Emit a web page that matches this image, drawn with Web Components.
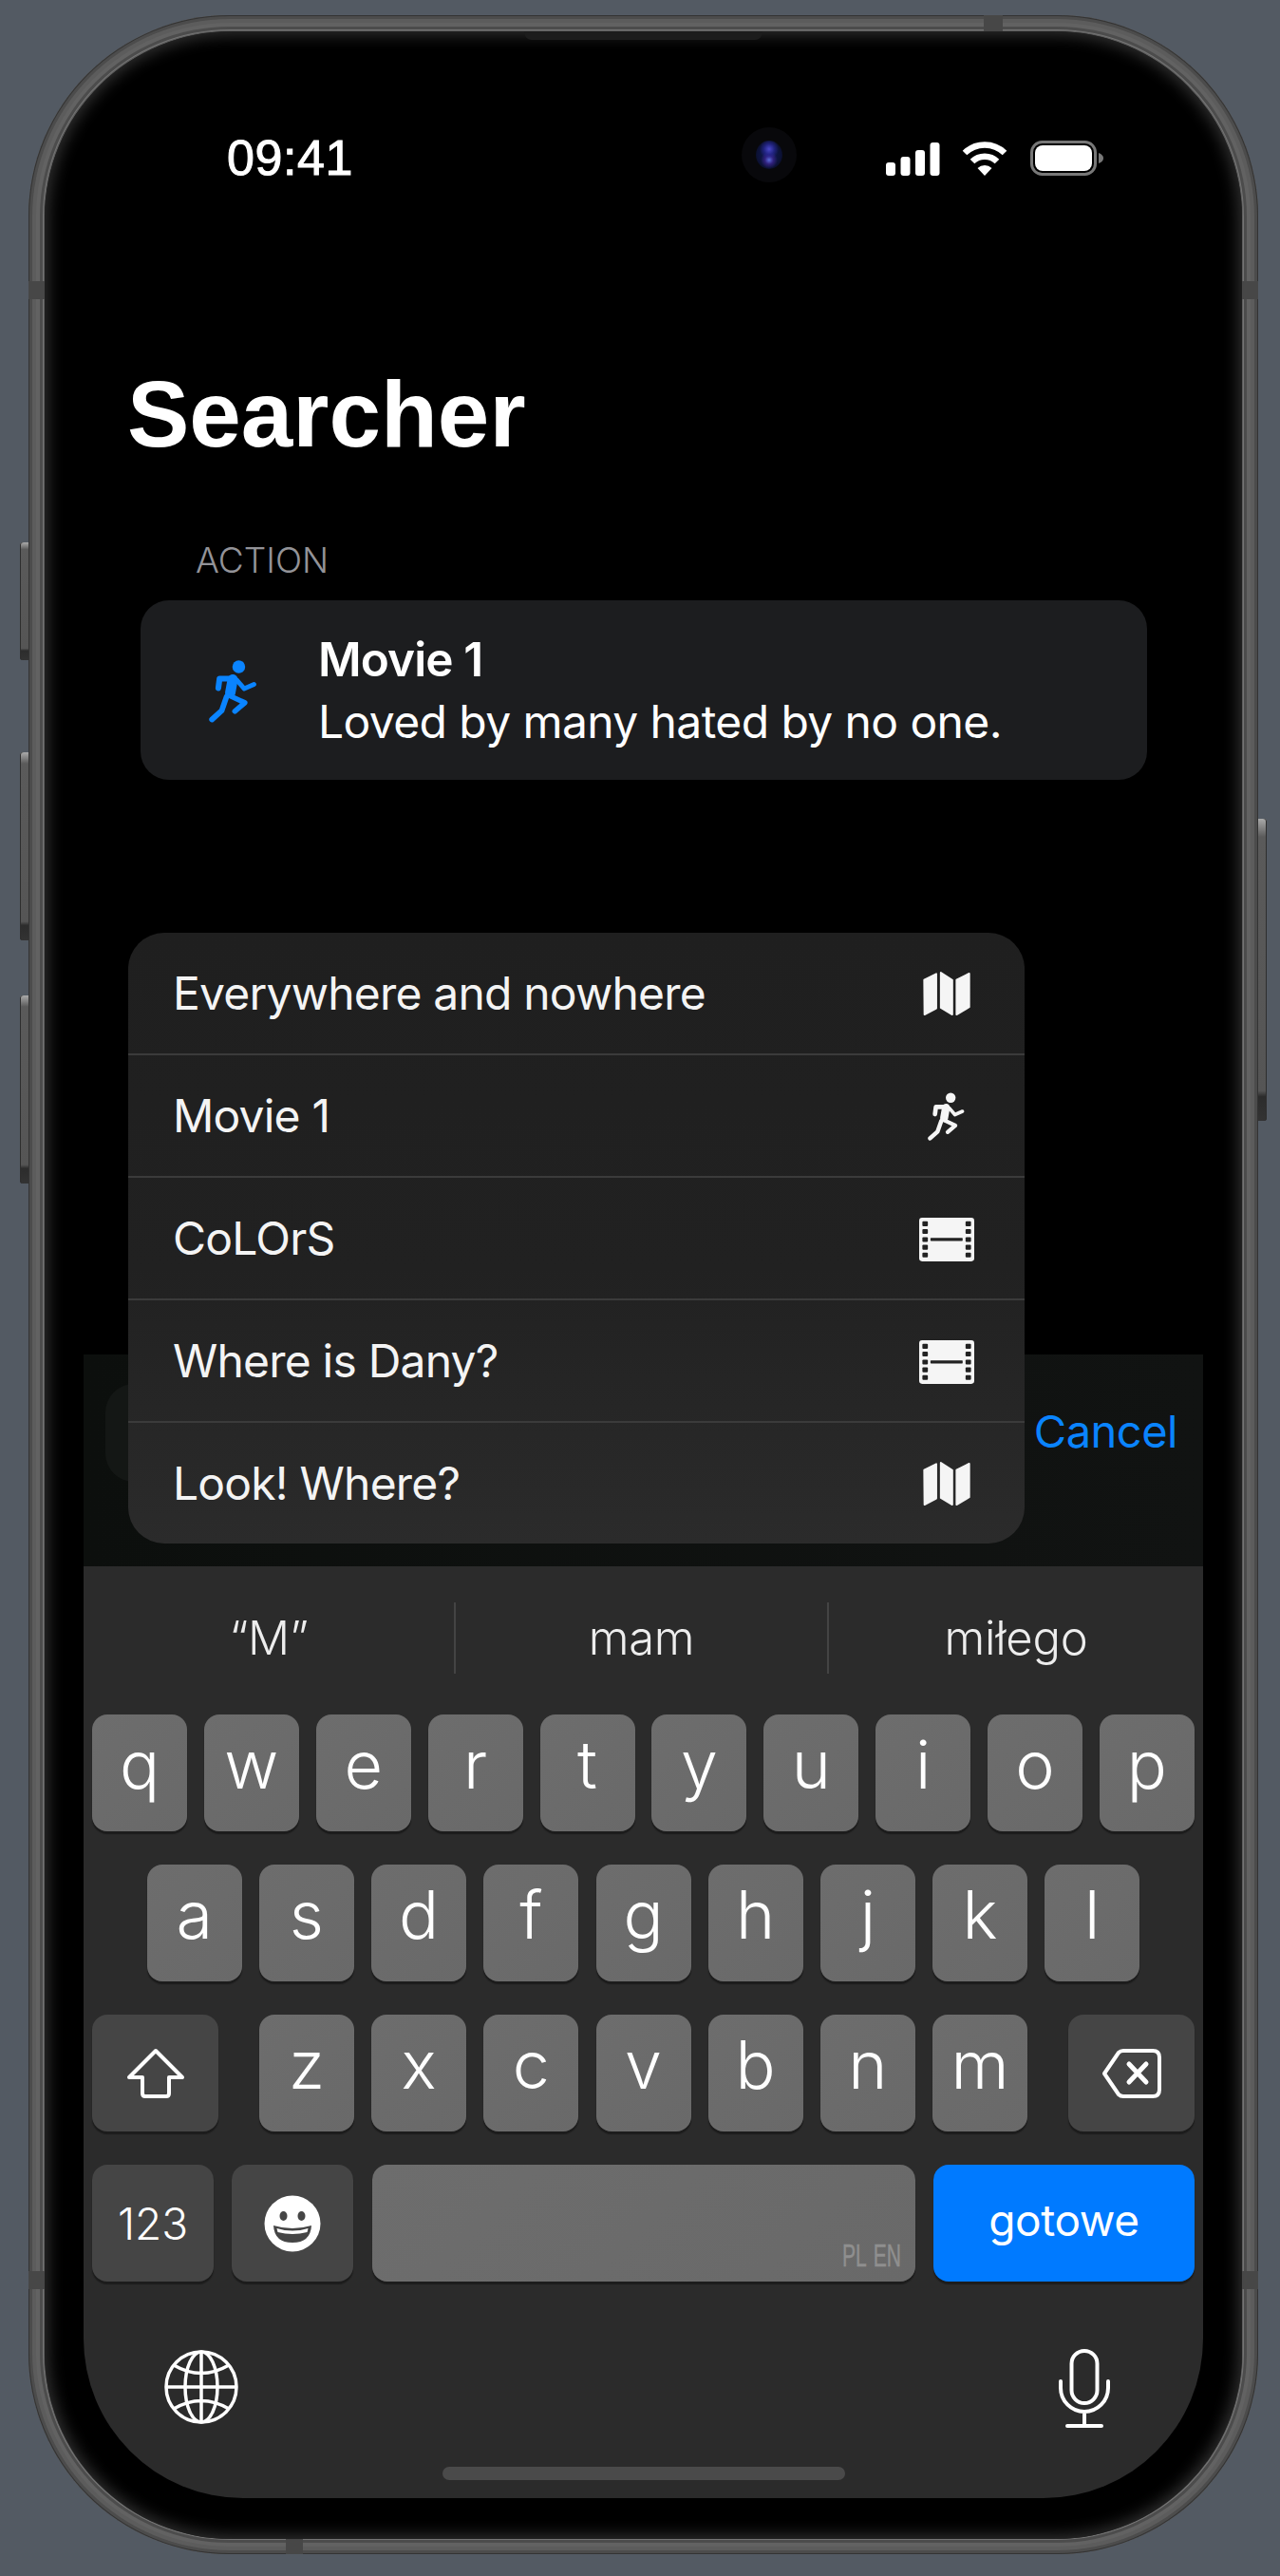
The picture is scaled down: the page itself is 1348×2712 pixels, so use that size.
<!DOCTYPE html>
<html lang="en">
<head>
<meta charset="utf-8">
<title>Searcher</title>
<style>
  html, body { margin: 0; background: #535a63; }
</style>
</head>
<body>
<phone-frame>
  <status-bar></status-bar>
  <large-title>Searcher</large-title>
  <result-section heading="ACTION">
    <result-card title="Movie 1" text="Loved by many hated by no one."></result-card>
  </result-section>
  <search-bar></search-bar>
  <suggest-menu>
    <menu-row icon="map">Everywhere and nowhere</menu-row>
    <menu-row icon="run">Movie 1</menu-row>
    <menu-row icon="film">CoLOrS</menu-row>
    <menu-row icon="film">Where is Dany?</menu-row>
    <menu-row icon="map">Look! Where?</menu-row>
  </suggest-menu>
  <ios-keyboard></ios-keyboard>
</phone-frame>

<script>
const SF = `Inter, "Liberation Sans", sans-serif`;

const ICONS = {
  run: `<svg xmlns="http://www.w3.org/2000/svg" viewBox="120 92 162 208" width="100%" height="100%" fill="none" stroke="currentColor" stroke-linecap="round" stroke-linejoin="round">
      <circle cx="218" cy="118" r="21" fill="currentColor" stroke="none"/>
      <path d="M151 188 L155 157 L200 157" stroke-width="19"/>
      <path d="M198 160 L190 204" stroke-width="34"/>
      <path d="M212 162 L236 190 L268 176" stroke-width="15"/>
      <path d="M186 212 L238 236 L205 264" stroke-width="17"/>
      <path d="M178 216 L162 262 L130 291" stroke-width="18"/>
    </svg>`,
  map: `<svg xmlns="http://www.w3.org/2000/svg" viewBox="92 62 158 148" width="100%" height="100%" fill="currentColor" stroke="currentColor" stroke-width="6" stroke-linejoin="round">
      <path d="M98 92 L137 72 V184 L99 204 Z"/>
      <path d="M152 68 L189 92 V204 L152 182 Z"/>
      <path d="M203 92 L244 71 V180 L203 204 Z"/>
    </svg>`,
  film: `<svg xmlns="http://www.w3.org/2000/svg" viewBox="87 845 171 135" width="100%" height="100%">
      <rect x="87" y="845" width="171" height="135" rx="9" fill="#f5f5f5"/>
      <g fill="#222">
        <rect x="97" y="856" width="17" height="15" rx="3"/><rect x="97" y="880" width="17" height="15" rx="3"/><rect x="97" y="905" width="17" height="15" rx="3"/><rect x="97" y="929" width="17" height="15" rx="3"/><rect x="97" y="953" width="17" height="15" rx="3"/>
        <rect x="231" y="856" width="17" height="15" rx="3"/><rect x="231" y="880" width="17" height="15" rx="3"/><rect x="231" y="905" width="17" height="15" rx="3"/><rect x="231" y="929" width="17" height="15" rx="3"/><rect x="231" y="953" width="17" height="15" rx="3"/>
        <rect x="122" y="907" width="100" height="10" rx="2"/>
      </g>
    </svg>`,
  shift: `<svg xmlns="http://www.w3.org/2000/svg" viewBox="0 0 62 54" width="62" height="54" fill="none" stroke="#fff" stroke-width="4" stroke-linejoin="round">
      <path d="M31 3 L59 31 H45 V48 Q45 51 42 51 H20 Q17 51 17 48 V31 H3 Z"/>
    </svg>`,
  del: `<svg xmlns="http://www.w3.org/2000/svg" viewBox="0 0 64 54" width="64" height="54" fill="none" stroke="#fff" stroke-width="4" stroke-linejoin="round" stroke-linecap="round">
      <path d="M23 3 H54 Q61 3 61 10 V44 Q61 51 54 51 H23 Q20 51 18 49 L3 27 L18 5 Q20 3 23 3 Z"/>
      <path d="M29 17 L47 36 M47 17 L29 36" stroke-width="5"/>
    </svg>`,
  emoji: `<svg xmlns="http://www.w3.org/2000/svg" viewBox="0 0 60 60" width="60" height="60">
      <circle cx="30" cy="30" r="29.5" fill="#fff"/>
      <ellipse cx="20.5" cy="22" rx="4" ry="5" fill="#454545"/>
      <ellipse cx="39.5" cy="22" rx="4" ry="5" fill="#454545"/>
      <path d="M10 32 Q30 38 50 32 Q49 50 30 50 Q11 50 10 32 Z" fill="#454545"/>
      <path d="M13.5 35 Q30 40 46.500 35 L45.500 39 Q30 43 14.500 39 Z" fill="#fff"/>
    </svg>`,
  globe: `<svg xmlns="http://www.w3.org/2000/svg" viewBox="0 0 80 80" width="80" height="80" fill="none" stroke="#fff" stroke-width="3.500">
      <circle cx="40" cy="40" r="37"/>
      <ellipse cx="40" cy="40" rx="17" ry="37"/>
      <path d="M40 3 V77 M3 40 H77 M11 17 Q40 34 69 17 M11 63 Q40 46 69 63"/>
    </svg>`,
  mic: `<svg xmlns="http://www.w3.org/2000/svg" viewBox="0 0 56 84" width="56" height="84" fill="none" stroke="#fff" stroke-width="4" stroke-linecap="round">
      <rect x="14.500" y="2" width="27" height="55" rx="13.500"/>
      <path d="M3 34 V41 A25 25 0 0 0 53 41 V34 M28 66 V80 M10 81 H46"/>
    </svg>`,
};

class PhoneFrame extends HTMLElement {
  constructor() {
    super();
    this.shadow = this.attachShadow({ mode: 'open' });
    this.shadow.innerHTML = `
      <style>
        :host {
          display: block;
          position: relative;
          box-sizing: border-box;
          width: 1295px;
          height: 2673px;
          margin: 16px 0 0 30px;
          padding: 17px 17px 16px 17px;
          border-radius: 212px;
          background: #5c5c5c;
          box-shadow: inset 0 0 0 1px #333, inset 0 0 0 4px #4c4c4c, inset 0 0 0 8px #5c5c5c, inset 0 0 0 12px #626262, inset 0 0 0 15px #4c4c4c, inset 0 0 0 16px #747474;
        }
        .screen {
          position: relative;
          box-sizing: border-box;
          height: 100%;
          padding: 0 41px 43px;
          border-radius: 196px;
          background: #000;
          box-shadow: inset 0 0 16px 4px #303030;
          display: flex;
          flex-direction: column;
        }
        .btn {
          position: absolute;
          width: 9px;
          background: linear-gradient(#aaa, #5a5a5a 6%, #555 90%, #2c2c2c 92%, #333);
          box-shadow: inset 1px 0 0 #2e2e2e;
        }
        .left { left: -9px; border-radius: 3px 0 0 3px; }
        .right { right: -9px; border-radius: 0 3px 3px 0; box-shadow: inset -1px 0 0 #2e2e2e; }
        .band { position: absolute; background: #474747; }
        .speaker {
          position: absolute;
          left: 522px;
          top: 17px;
          width: 251px;
          height: 9px;
          background: #1c1c1c;
          border-radius: 0 0 8px 8px;
        }
        .camera {
          position: absolute;
          left: 751px;
          top: 118px;
          width: 58px;
          height: 58px;
          border-radius: 50%;
          background: #08080b;
          display: flex;
          align-items: center;
          justify-content: center;
        }
        .lens {
          width: 28px;
          height: 30px;
          border-radius: 50%;
          background:
            radial-gradient(circle at 50% 30%, #4a48c8 0, rgba(40, 40, 150, 0.7) 22%, transparent 40%),
            radial-gradient(circle at 50% 68%, #5a6ad8 0, rgba(70, 40, 160, 0.6) 18%, transparent 36%),
            radial-gradient(ellipse at center, #101a58 0, #0c1238 60%, #08080b 100%);
        }
      </style>
      <div class="btn left" style="top:555px;height:124px"></div>
      <div class="btn left" style="top:776px;height:198px"></div>
      <div class="btn left" style="top:1032px;height:198px"></div>
      <div class="btn right" style="top:846px;height:318px"></div>
      <div class="band" style="left:0;top:280px;width:17px;height:19px"></div>
      <div class="band" style="right:0;top:280px;width:17px;height:19px"></div>
      <div class="band" style="left:0;top:2375px;width:17px;height:19px"></div>
      <div class="band" style="right:0;top:2375px;width:17px;height:19px"></div>
      <div class="band" style="left:1006px;top:0;width:20px;height:17px"></div>
      <div class="band" style="left:271px;bottom:0;width:18px;height:16px"></div>
      <div class="screen"><slot></slot></div>
      <div class="speaker"></div>
      <div class="camera"><div class="lens"></div></div>
    `;
  }
}

class StatusBar extends HTMLElement {
  constructor() {
    super();
    this.shadow = this.attachShadow({ mode: 'open' });
    this.shadow.innerHTML = `
      <style>
        :host {
          display: flex;
          justify-content: space-between;
          align-items: center;
          box-sizing: border-box;
          height: 152px;
          padding: 115px 104px 0 151px;
          color: #fff;
        }
        .time { font: 400 52px/51px "Liberation Sans", sans-serif; letter-spacing: 0.6px; -webkit-text-stroke: 1px #fff; }
        .icons { display: flex; align-items: center; gap: 23px; }
      </style>
      <span class="time">09:41</span>
      <div class="icons">
        <svg xmlns="http://www.w3.org/2000/svg" width="57" height="36" viewBox="0 0 57 36" fill="#fff">
          <rect x="0" y="22" width="10" height="14" rx="3"/>
          <rect x="15.500" y="16" width="10" height="20" rx="3"/>
          <rect x="31" y="9" width="10" height="27" rx="3"/>
          <rect x="46.500" y="1" width="10" height="35" rx="3"/>
        </svg>
        <svg xmlns="http://www.w3.org/2000/svg" width="48" height="36" viewBox="0 0 48 36" style="margin-right:1px">
          <g fill="none" stroke="#fff" stroke-width="6.500">
            <path d="M3 12 A30 30 0 0 1 45 12"/>
            <path d="M11 21 A18.500 18.500 0 0 1 37 21"/>
          </g>
          <path d="M24 36 L16.500 28 A11 11 0 0 1 31.500 28 Z" fill="#fff"/>
        </svg>
        <svg xmlns="http://www.w3.org/2000/svg" width="78" height="37" viewBox="0 0 78 37">
          <rect x="1.500" y="1.500" width="67" height="34" rx="11" fill="none" stroke="#787878" stroke-width="3"/>
          <rect x="5" y="5" width="60" height="27" rx="8" fill="#fff"/>
          <path d="M72 13 Q77 15 77 18.500 Q77 22 72 24 Z" fill="#787878"/>
        </svg>
      </div>
    `;
  }
}

class LargeTitle extends HTMLElement {
  constructor() {
    super();
    this.shadow = this.attachShadow({ mode: 'open' });
    this.shadow.innerHTML = `
      <style>
        :host {
          display: block;
          margin: 203px 0 2px 46px;
          font: 700 98px/97px "Liberation Sans", sans-serif;
          color: #fff;
        }
      </style>
      <slot></slot>
    `;
  }
}

class ResultSection extends HTMLElement {
  constructor() {
    super();
    this.shadow = this.attachShadow({ mode: 'open' });
    this.shadow.innerHTML = `
      <style>
        :host { display: block; margin: 83px 0 0 60px; width: 1060px; }
        .head {
          height: 40px;
          margin: 0 0 22px 58px;
          font: 300 37px/40px ${SF};
          color: #939398;
        }
      </style>
      <div class="head">${this.getAttribute('heading')}</div>
      <slot></slot>
    `;
  }
}

class ResultCard extends HTMLElement {
  constructor() {
    super();
    this.shadow = this.attachShadow({ mode: 'open' });
    this.shadow.innerHTML = `
      <style>
        :host {
          display: flex;
          align-items: center;
          box-sizing: border-box;
          height: 189px;
          padding-left: 72px;
          border-radius: 30px;
          background: #1c1d1f;
          color: #fff;
        }
        .ico { width: 52px; height: 68px; color: #0a84ff; margin-right: 63px; }
        .t { font: 600 49.500px/65px ${SF}; letter-spacing: -0.9px; }
        .d { font: 400 48px/65px ${SF}; letter-spacing: -0.6px; }
      </style>
      <div class="ico">${ICONS.run}</div>
      <div>
        <div class="t">${this.getAttribute('title')}</div>
        <div class="d">${this.getAttribute('text')}</div>
      </div>
    `;
  }
}

class SearchBar extends HTMLElement {
  constructor() {
    super();
    this.shadow = this.attachShadow({ mode: 'open' });
    this.shadow.innerHTML = `
      <style>
        :host {
          display: flex;
          align-items: flex-start;
          box-sizing: border-box;
          height: 223px;
          margin-top: auto;
          padding: 31px 27px 0 23px;
          gap: 15px;
          background: linear-gradient(90deg, #0c0f0d, #111312);
        }
        .field { flex: 1; height: 103px; border-radius: 30px; background: #141715; }
        .cancel { font: 400 47px/99px ${SF}; letter-spacing: -0.5px; color: #0a84ff; }
      </style>
      <div class="field"></div>
      <span class="cancel">Cancel</span>
    `;
  }
}

class SuggestMenu extends HTMLElement {
  constructor() {
    super();
    this.shadow = this.attachShadow({ mode: 'open' });
    this.shadow.innerHTML = `
      <style>
        :host {
          display: block;
          position: absolute;
          left: 88px;
          top: 949px;
          width: 944px;
          border-radius: 38px;
          overflow: hidden;
          background: linear-gradient(#1f1f1f, #212121 55%, #2b2b2b);
        }
      </style>
      <slot></slot>
    `;
  }
}

class MenuRow extends HTMLElement {
  constructor() {
    super();
    this.shadow = this.attachShadow({ mode: 'open' });
    const icon = this.getAttribute('icon');
    const size = { map: [52, 48], run: [40, 54], film: [58, 46] }[icon];
    this.shadow.innerHTML = `
      <style>
        :host {
          display: flex;
          align-items: center;
          justify-content: space-between;
          box-sizing: border-box;
          height: 129px;
          padding: 0 52px 0 47px;
          border-bottom: 2px solid #3b3b3b;
          font: 400 48px/60px ${SF};
          letter-spacing: -0.8px;
          color: #f4f4f4;
        }
        :host(:last-child) { border-bottom: 0; height: 127px; }
        .slot-ico { width: 60px; display: flex; justify-content: center; }
        .ico { width: ${size[0]}px; height: ${size[1]}px; color: #f5f5f5; }
      </style>
      <span><slot></slot></span>
      <div class="slot-ico"><div class="ico">${ICONS[icon]}</div></div>
    `;
  }
}

class KeyCap extends HTMLElement {
  constructor() {
    super();
    this.shadow = this.attachShadow({ mode: 'open' });
    const w = this.getAttribute('w') || 100;
    this.shadow.innerHTML = `
      <style>
        :host {
          display: flex;
          align-items: center;
          justify-content: center;
          box-sizing: border-box;
          flex: none;
          width: ${w}px;
          height: 123px;
          padding-bottom: 18px;
          border-radius: 16px;
          background: linear-gradient(135deg, #6d6d6d, #696969);
          box-shadow: 0 3px 1px #1c1c1c;
          font: 300 70px/70px ${SF};
          color: #fff;
        }
        span { display: flex; align-items: center; justify-content: center; }
        :host([kind="fn"]) { background: #454545; padding-bottom: 0; font: 300 46px/46px ${SF}; }
        :host([kind="go"]) { background: #007aff; padding-bottom: 7px; font: 400 46px/46px ${SF}; letter-spacing: -0.4px; }
        :host([kind="space"]) { justify-content: flex-end; align-items: flex-end; padding: 0 15px 11px 0; }
        :host([kind="space"]) span { font: 400 34px/34px "Liberation Sans", sans-serif; word-spacing: 3px; color: #8f8f8f; transform: scaleX(0.62); transform-origin: right; white-space: nowrap; -webkit-text-stroke: 0.5px #8f8f8f; }
      </style>
      <span><slot></slot></span>
    `;
  }
}

class IosKeyboard extends HTMLElement {
  constructor() {
    super();
    this.shadow = this.attachShadow({ mode: 'open' });
    const row = (s) => [...s].map((c) => `<key-cap>${c}</key-cap>`).join('');
    this.shadow.innerHTML = `
      <style>
        :host {
          display: block;
          box-sizing: border-box;
          height: 981px;
          padding: 0 9px;
          background: #2b2b2b;
          border-radius: 0 0 168px 168px;
        }
        .suggest {
          display: grid;
          grid-template-columns: 390px 393px 1fr;
          height: 73px;
          padding: 38px 0 45px;
          margin-left: -9px;
          margin-right: -9px;
          font: 300 49px/75px ${SF};
          letter-spacing: -0.3px;
          color: #ededed;
          text-align: center;
        }
        .suggest span + span { border-left: 2px solid #444; }
        .rows { display: flex; flex-direction: column; gap: 35px; }
        .row { display: flex; justify-content: space-between; }
        .row.mid { justify-content: center; gap: 18.200px; }
        .letters { display: flex; gap: 18.200px; }
        .tools { display: flex; justify-content: space-between; padding: 71px 88px 0 75px; height: 84px; }
        .tools svg { display: block; }
        .home { width: 424px; height: 14px; margin: 40px auto 0; border-radius: 7px; background: #4a4a4a; }
      </style>
      <div class="suggest"><span>“M”</span><span>mam</span><span>miłego</span></div>
      <div class="rows">
        <div class="row">${row('qwertyuiop')}</div>
        <div class="row mid">${row('asdfghjkl')}</div>
        <div class="row">
          <key-cap kind="fn" w="133">${ICONS.shift}</key-cap>
          <div class="letters">${row('zxcvbnm')}</div>
          <key-cap kind="fn" w="133">${ICONS.del}</key-cap>
        </div>
        <div class="row">
          <key-cap kind="fn" w="128">123</key-cap>
          <key-cap kind="fn" w="128">${ICONS.emoji}</key-cap>
          <key-cap kind="space" w="572">PL EN</key-cap>
          <key-cap kind="go" w="275">gotowe</key-cap>
        </div>
      </div>
      <div class="tools">${ICONS.globe}${ICONS.mic}</div>
      <div class="home"></div>
    `;
  }
}

customElements.define('phone-frame', PhoneFrame);
customElements.define('status-bar', StatusBar);
customElements.define('large-title', LargeTitle);
customElements.define('result-section', ResultSection);
customElements.define('result-card', ResultCard);
customElements.define('search-bar', SearchBar);
customElements.define('suggest-menu', SuggestMenu);
customElements.define('menu-row', MenuRow);
customElements.define('key-cap', KeyCap);
customElements.define('ios-keyboard', IosKeyboard);
</script>
</body>
</html>
